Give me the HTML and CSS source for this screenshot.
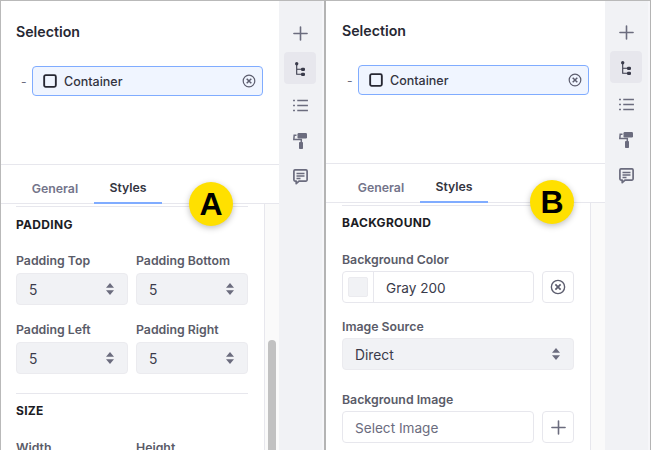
FILE: index.html
```html
<!DOCTYPE html>
<html lang="en">
<head>
<meta charset="utf-8">
<title>Container styles</title>
<link rel="stylesheet" href="styles.css">
</head>
<body>
<svg class="defs" aria-hidden="true">
  <symbol id="i-plus" viewBox="0 0 16 16"><path d="M8 1v14M1 8h14" fill="none" stroke="currentColor" stroke-width="1.7" stroke-linecap="round"/></symbol>
  <symbol id="i-tree" viewBox="0 0 10 14"><path d="M1.700 1.700V12.300H7M1.700 7.300H7" fill="none" stroke="currentColor" stroke-width="1.100"/><circle cx="1.700" cy="1.700" r="1.700" fill="currentColor"/><rect x="6" y="5.700" width="4" height="3.300" rx="1.200" fill="currentColor"/><rect x="6" y="10.700" width="4" height="3.300" rx="1.200" fill="currentColor"/></symbol>
  <symbol id="i-list" viewBox="0 0 16 14"><path d="M4.500 1.500H16M4.500 7H16M4.500 12.500H16" fill="none" stroke="currentColor" stroke-width="1.600"/><path d="M0 1.500h2M0 7h2M0 12.500h2" fill="none" stroke="currentColor" stroke-width="1.600"/></symbol>
  <symbol id="i-roller" viewBox="0 0 14 16"><path d="M4.500 1.200A1.200 1.200 0 0 1 5.700 0h7.100A1.200 1.200 0 0 1 14 1.200v3.100a1.200 1.200 0 0 1-1.200 1.200H5.700a1.200 1.200 0 0 1-1.200-1.200z" fill="currentColor"/><path d="M3.500 2.200H1.200L.8 6.600h7.500v2.600" fill="none" stroke="currentColor" stroke-width="1.500"/><rect x="6" y="9" width="4" height="7" rx=".8" fill="currentColor"/></symbol>
  <symbol id="i-chat" viewBox="0 0 15 16"><path d="M2 .9h11A1.200 1.200 0 0 1 14.100 2v9A1.200 1.200 0 0 1 13 12.100H6l-2.800 2.500v-2.500H2A1.200 1.200 0 0 1 .9 11V2A1.200 1.200 0 0 1 2 .9z" fill="none" stroke="currentColor" stroke-width="1.700" stroke-linejoin="round"/><path d="M3.500 4.500h8M3.500 7h8M3.500 9.500h4" fill="none" stroke="currentColor" stroke-width="1.300"/></symbol>
  <symbol id="i-square" viewBox="0 0 12 12"><rect x="1" y="1" width="10" height="10" rx="1.300" fill="none" stroke="currentColor" stroke-width="1.600"/></symbol>
  <symbol id="i-clear" viewBox="0 0 14 14"><circle cx="7" cy="7" r="5.800" fill="none" stroke="currentColor" stroke-width="1.200"/><path d="M4.700 4.700l4.600 4.600M9.300 4.700l-4.600 4.600" fill="none" stroke="currentColor" stroke-width="1.500"/></symbol>
  <symbol id="i-caret" viewBox="0 0 8 12"><path d="M4 0l4 4.800H0zM4 12L0 7.200h8z" fill="currentColor"/></symbol>
</svg>

<main class="screens">
  <section class="panel panel-a">
    <div class="main">
      <div class="selection">
        <h2 class="title">Selection</h2>
        <div class="tree-row">
          <span class="dash">-</span>
          <div class="tree-item">
            <svg class="ico-square"><use href="#i-square"/></svg>
            <span class="tree-name">Container</span>
            <svg class="ico-clear"><use href="#i-clear"/></svg>
          </div>
        </div>
      </div>
      <nav class="tabs">
        <span class="tab">General</span>
        <span class="tab tab-active">Styles</span>
      </nav>
      <div class="scroll">
        <div class="content">
          <hr class="rule rule-top">
          <h3 class="section">PADDING</h3>
          <div class="grid">
            <div class="field"><label class="label">Padding Top</label><div class="select"><span class="value">5</span><svg class="ico-caret"><use href="#i-caret"/></svg></div></div>
            <div class="field"><label class="label">Padding Bottom</label><div class="select"><span class="value">5</span><svg class="ico-caret"><use href="#i-caret"/></svg></div></div>
            <div class="field"><label class="label">Padding Left</label><div class="select"><span class="value">5</span><svg class="ico-caret"><use href="#i-caret"/></svg></div></div>
            <div class="field"><label class="label">Padding Right</label><div class="select"><span class="value">5</span><svg class="ico-caret"><use href="#i-caret"/></svg></div></div>
          </div>
          <hr class="rule rule-mid">
          <h3 class="section section-next">SIZE</h3>
          <div class="grid grid-next">
            <div class="field"><label class="label">Width</label></div>
            <div class="field"><label class="label">Height</label></div>
          </div>
        </div>
        <div class="track"><div class="thumb"></div></div>
      </div>
    </div>
    <aside class="rail">
      <span class="rail-btn"><svg class="ico-plus"><use href="#i-plus"/></svg></span>
      <span class="rail-btn rail-btn-active"><svg class="ico-tree"><use href="#i-tree"/></svg></span>
      <span class="rail-btn"><svg class="ico-list"><use href="#i-list"/></svg></span>
      <span class="rail-btn"><svg class="ico-roller"><use href="#i-roller"/></svg></span>
      <span class="rail-btn"><svg class="ico-chat"><use href="#i-chat"/></svg></span>
    </aside>
    <span class="badge badge-a">A</span>
  </section>

  <section class="panel panel-b">
    <div class="main">
      <div class="selection">
        <h2 class="title">Selection</h2>
        <div class="tree-row">
          <span class="dash">-</span>
          <div class="tree-item">
            <svg class="ico-square"><use href="#i-square"/></svg>
            <span class="tree-name">Container</span>
            <svg class="ico-clear"><use href="#i-clear"/></svg>
          </div>
        </div>
      </div>
      <nav class="tabs">
        <span class="tab">General</span>
        <span class="tab tab-active">Styles</span>
      </nav>
      <div class="scroll">
        <div class="content">
          <hr class="rule rule-top">
          <h3 class="section section-next">BACKGROUND</h3>
          <div class="field-b field-first">
            <label class="label label-tight">Background Color</label>
            <div class="input-row">
              <div class="input input-color"><span class="swatch-cell"><span class="swatch"></span></span><span class="value input-value">Gray 200</span></div>
              <span class="square-btn"><svg class="ico-clear-lg"><use href="#i-clear"/></svg></span>
            </div>
          </div>
          <div class="field-b">
            <label class="label label-tight">Image Source</label>
            <div class="select"><span class="value">Direct</span><svg class="ico-caret"><use href="#i-caret"/></svg></div>
          </div>
          <div class="field-b field-gap">
            <label class="label label-tight">Background Image</label>
            <div class="input-row">
              <div class="input"><span class="value placeholder">Select Image</span></div>
              <span class="square-btn"><svg class="ico-plus-sm"><use href="#i-plus"/></svg></span>
            </div>
          </div>
        </div>
        <div class="track"></div>
      </div>
    </div>
    <aside class="rail">
      <span class="rail-btn"><svg class="ico-plus"><use href="#i-plus"/></svg></span>
      <span class="rail-btn rail-btn-active"><svg class="ico-tree"><use href="#i-tree"/></svg></span>
      <span class="rail-btn"><svg class="ico-list"><use href="#i-list"/></svg></span>
      <span class="rail-btn"><svg class="ico-roller"><use href="#i-roller"/></svg></span>
      <span class="rail-btn"><svg class="ico-chat"><use href="#i-chat"/></svg></span>
    </aside>
    <span class="badge badge-b">B</span>
  </section>
</main>
</body>
</html>
```
FILE: styles.css
```css
* { box-sizing: border-box; }

html, body {
  margin: 0;
  width: 651px;
  height: 450px;
  overflow: hidden;
  background: #fff;
  font-family: Inter, "Liberation Sans", sans-serif;
  color: #272833;
}

.defs { display: none; }

.screens { display: flex; height: 450px; }

.panel {
  position: relative;
  display: flex;
  height: 450px;
  overflow: hidden;
  border-top: 1px solid #b9b9b9;
}
.panel-a { width: 326px; border-left: 1px solid #b9b9b9; border-right: 2px solid #b4b4b4; }
.panel-b { width: 325px; border-right: 1px solid #b4b4b4; }

.main { flex: 1; min-width: 0; display: flex; flex-direction: column; }

.selection { border-bottom: 1px solid #e7e7ed; padding: 21px 0 0 15px; }
.panel-a .selection { height: 164px; }
.panel-b .selection { height: 163px; padding-top: 20px; padding-left: 16px; }

.title { margin: 0; font-size: 14.2px; line-height: 20px; font-weight: 600; color: #272833; }

.tree-row { display: flex; align-items: center; margin-top: 24px; }
.dash { width: 16px; padding-left: 5px; font-size: 12px; color: #6b6c7e; }

.tree-item {
  width: 231px;
  height: 30px;
  display: flex;
  align-items: center;
  padding: 0 6px 0 10px;
  background: #f0f5ff;
  border: 1px solid #80acff;
  border-radius: 4px;
}
.ico-square { width: 14px; height: 14px; color: #272833; margin-right: 7px; }
.tree-name { flex: 1; font-size: 12.5px; font-weight: 500; color: #33343f; }
.ico-clear { width: 14px; height: 14px; color: #5c5d6e; }

.tabs {
  height: 39px;
  display: flex;
  padding-left: 15px;
  border-bottom: 1px solid #e7e7ed;
}
.panel-b .tabs { padding-left: 16px; }
.tab {
  width: 78px;
  display: flex;
  align-items: center;
  justify-content: center;
  font-size: 12.3px;
  font-weight: 600;
  color: #73748a;
  padding-top: 7px;
  margin-bottom: -1px;
}
.tab-active {
  width: 68px;
  color: #33343f;
  border-bottom: 2px solid #80acff;
}

.scroll { flex: 1; min-height: 0; display: flex; overflow: hidden; }
.content { flex: 1; min-width: 0; padding: 0 16px 0 15px; }
.panel-b .content { padding-left: 16px; }

.track {
  width: 15px;
  background: #fafafa;
  border-left: 1px solid #e7e7ed;
}
.thumb {
  width: 8px;
  margin: 136px 0 0 3px;
  height: 130px;
  background: #c1c1c1;
  border-radius: 4px;
}

.rule { height: 1px; margin: 0; border: 0; background: #e7e7ed; }
.rule-top { margin-top: 2px; }
.rule-mid { margin-top: 19px; }

.section { margin: 0; font-size: 12px; line-height: 16px; font-weight: 700; letter-spacing: .3px; color: #1c1c24; padding-top: 10px; }
.section-next { padding-top: 9px; }

.grid { display: grid; grid-template-columns: 112px 112px; column-gap: 8px; row-gap: 16px; margin-top: 19px; }
.grid-next { margin-top: 20px; }

.label { display: block; font-size: 12.3px; line-height: 18px; font-weight: 600; color: #5a5b68; margin-bottom: 3px; }
.label-tight { margin-bottom: 2px; }

.select {
  height: 32px;
  display: flex;
  align-items: center;
  justify-content: space-between;
  padding: 0 13px 0 12px;
  background: #f1f2f5;
  border: 1px solid #ebebef;
  border-radius: 4px;
  font-size: 13.8px;
  color: #393a4a;
}
.ico-caret { width: 8px; height: 12px; color: #6b6c7e; }
.value { margin-top: 2px; }

.field-b { margin-top: 15px; }
.field-first { margin-top: 20px; }
.field-gap { margin-top: 21px; }

.input-row { display: flex; gap: 8px; }
.input {
  width: 192px;
  height: 32px;
  display: flex;
  align-items: center;
  background: #fff;
  border: 1px solid #e7e7ed;
  border-radius: 4px;
  font-size: 13.6px;
  color: #393a4a;
  padding-left: 12px;
}
.input-color { padding-left: 0; }
.swatch-cell {
  width: 31px;
  height: 100%;
  display: flex;
  align-items: center;
  justify-content: center;
  border-right: 1px solid #e7e7ed;
}
.swatch { width: 20px; height: 20px; background: #f1f2f5; border: 1px solid #ebebef; border-radius: 2px; }
.input-value { padding-left: 12px; }
.placeholder { color: #6b6c7e; }

.square-btn {
  width: 32px;
  height: 32px;
  display: flex;
  align-items: center;
  justify-content: center;
  border: 1px solid #e7e7ed;
  border-radius: 4px;
  color: #6b6c7e;
}
.ico-clear-lg { width: 16px; height: 16px; color: #5c5d6e; }
.ico-plus-sm { width: 15px; height: 15px; }

.rail {
  width: 45px;
  display: flex;
  flex-direction: column;
  gap: 4px;
  padding: 16px 0 0 5px;
  background: #f1f2f5;
  border-right: 2px solid #f6f6f9;
  color: #6b6c7e;
}
.panel-b .rail { padding-top: 15px; }

.rail-btn {
  width: 32px;
  height: 32px;
  display: flex;
  align-items: center;
  justify-content: center;
  border-radius: 4px;
}
.rail-btn-active { background: #e7e7ed; margin: -1px 0 1px; color: #393a4a; }
.ico-plus { width: 15px; height: 15px; }
.ico-tree { width: 10px; height: 14px; margin-top: 2px; color: #393a4a; }
.ico-list { width: 15px; height: 13px; }
.ico-roller { width: 14px; height: 16px; }
.ico-chat { width: 15px; height: 16px; }

.badge {
  position: absolute;
  width: 44px;
  height: 44px;
  display: flex;
  align-items: center;
  justify-content: center;
  background: #ffe000;
  border-radius: 50%;
  box-shadow: 0 2px 6px rgba(0, 0, 0, .25);
  font-family: "Liberation Sans", Arial, sans-serif;
  font-size: 32px;
  font-weight: 700;
  color: #000;
}
.badge-a { left: 188px; top: 181px; }
.badge-b { left: 204px; top: 179px; }
```
